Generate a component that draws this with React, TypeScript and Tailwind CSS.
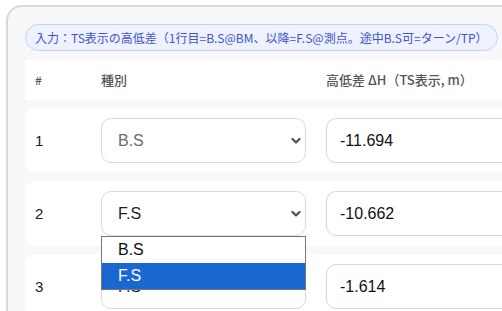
import React from "react";

// Rows of TS level differences
interface Row {
  no: number;
  kind: "B.S" | "F.S";
  dh: string;
  locked?: boolean;
}

const rows: Row[] = [
  { no: 1, kind: "B.S", dh: "-11.694", locked: true },
  { no: 2, kind: "F.S", dh: "-10.662" },
  { no: 3, kind: "F.S", dh: "-1.614" },
];

const Chevron = () => (
  <svg
    className="pointer-events-none absolute right-[5px] top-1/2 -translate-y-1/2"
    width="10"
    height="7"
    viewBox="0 0 10 7"
    fill="none"
  >
    <path d="M1.5 1.5 L5 5 L8.5 1.5" stroke="#4b4f56" strokeWidth="2.2" strokeLinecap="round" strokeLinejoin="round" />
  </svg>
);

const App = () => {
  return (
    <div className="h-[311px] w-[502px] overflow-hidden bg-white pl-[6px] pt-[5px]">
      <div className="w-[620px] rounded-tl-[16px] border-2 border-[#d3d9e1] bg-[#f8f8f9] p-[17px] pr-0 font-['Noto_Sans_CJK_JP','Noto_Sans',sans-serif]">
        <div className="inline-block rounded-full border border-[#c5cffb] bg-[#eef1ff] px-[9px] py-[3px] text-[12px] leading-[19px] whitespace-nowrap text-[#4156c6]">
          入力：TS表示の高低差（1行目=B.S@BM、以降=F.S@測点。途中B.S可=ターン/TP）
        </div>

        {/* header */}
        <div className="mt-[9px] flex h-[40px] items-center bg-white text-[13px] font-medium text-[#555]">
          <div className="w-[76px] pl-[10px] text-[12px]">#</div>
          <div className="w-[225px]">種別</div>
          <div>高低差 ΔH（TS表示, m）</div>
        </div>

        {rows.map((r) => (
          <div
            key={r.no}
            className="mt-[8px] flex h-[65px] items-center rounded-[10px] bg-white font-['Liberation_Sans',Arial,sans-serif]"
          >
            <div className="w-[76px] pl-[10px] pt-[2px] text-[15px] text-[#222]">{r.no}</div>
            <div className="relative w-[205px]">
              <select
                defaultValue={r.kind}
                disabled={r.locked}
                className={
                  "h-[45px] w-full appearance-none rounded-[10px] border border-[#dadada] bg-white pl-[16px] text-[16px] outline-none " +
                  (r.locked ? "text-[#6b6b70]" : "text-[#1f1f1f]")
                }
              >
                <option>B.S</option>
                <option>F.S</option>
              </select>
              <Chevron />
              {r.no === 2 && (
                <div className="absolute left-0 top-[45px] z-10 w-[205px] border border-[#767676] bg-white text-[16px]">
                  <div className="flex h-[26px] items-center pl-[16px] text-[#111]">B.S</div>
                  <div className="flex h-[26px] items-center bg-[#1a67d2] pl-[16px] text-white">F.S</div>
                </div>
              )}
            </div>
            <input
              defaultValue={r.dh}
              className="ml-[20px] h-[45px] w-[260px] rounded-[10px] border border-[#d6d6d6] bg-white pl-[13px] text-[16px] text-[#111] outline-none"
            />
          </div>
        ))}
      </div>
    </div>
  );
};

export default App;
